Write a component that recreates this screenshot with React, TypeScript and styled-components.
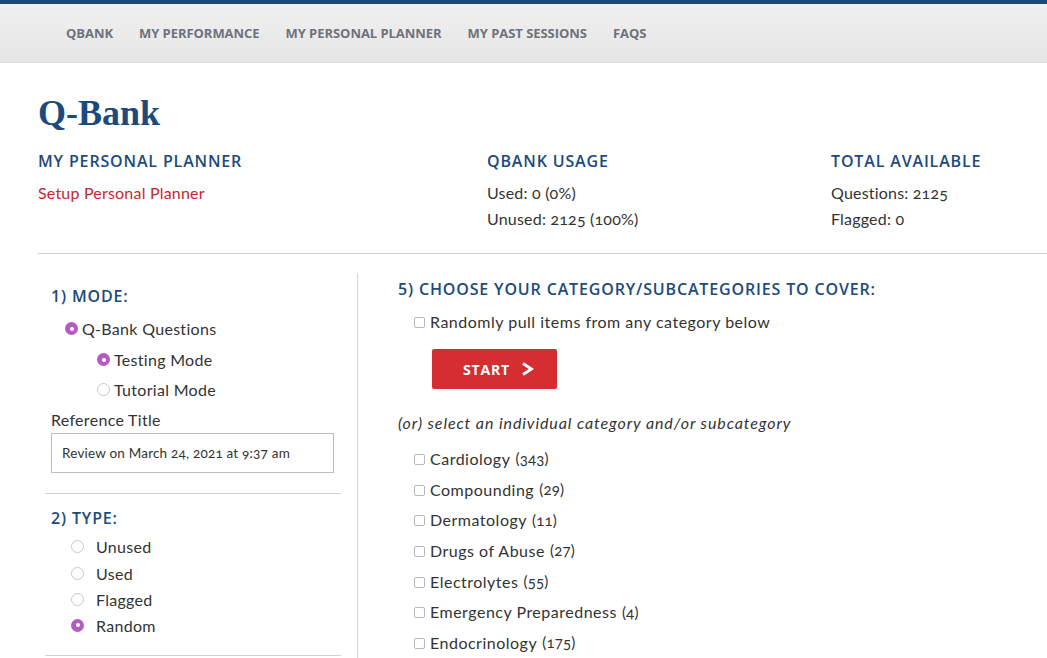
import React from "react";
import styled, { createGlobalStyle } from "styled-components";

const Global = createGlobalStyle`
  html, body { margin: 0; padding: 0; background: #fff; }
  body {
    font-family: "Lato", "Open Sans", sans-serif;
    color: #333;
    font-variant-numeric: oldstyle-nums;
  }
  * { box-sizing: border-box; }
`;

const blue = "#1c4a7c";

const Page = styled.div`
  width: 1047px;
  height: 658px;
  overflow: hidden;
`;

const NavBar = styled.nav`
  border-top: 4px solid ${blue};
  height: 63px;
  background: linear-gradient(#f0f0f0, #e6e6e6);
  border-bottom: 1px solid #ddd;
  display: flex;
  align-items: center;
  gap: 26px;
  padding: 0 0 0 66px;
`;

const NavItem = styled.a`
  font-family: "Open Sans", sans-serif;
  font-weight: 700;
  font-size: 13px;
  color: #6f727c;
  letter-spacing: -0.05px;
  text-decoration: none;
  font-variant-numeric: normal;
`;

const Main = styled.main`
  padding: 0 0 0 38px;
`;

const Title = styled.h1`
  margin: 0;
  padding-top: 30px;
  height: 86px;
  font-family: "Liberation Serif", "DejaVu Serif", serif;
  font-weight: 700;
  font-size: 36px;
  line-height: 40px;
  color: ${blue};
`;

const Summary = styled.section`
  display: grid;
  grid-template-columns: 449px 344px 1fr;
  padding-top: 2px;
  padding-bottom: 21px;
  border-bottom: 1px solid #cfcfcf;
`;

const SummaryCol = styled.div`
  display: flex;
  flex-direction: column;
`;

const Heading = styled.h3`
  margin: 0;
  font-family: "Open Sans", sans-serif;
  font-weight: 600;
  font-size: 16px;
  line-height: 20px;
  color: ${blue};
  text-transform: uppercase;
  letter-spacing: 0.85px;
  font-variant-numeric: normal;
`;

const SummaryHeading = styled(Heading)`
  margin-bottom: 9px;
`;

const Stat = styled.div<{ $red?: boolean }>`
  font-size: 16px;
  line-height: 26px;
  letter-spacing: 0.2px;
  color: ${(p) => (p.$red ? "#c4282e" : "#333")};
`;

const Body = styled.div`
  display: grid;
  grid-template-columns: 320px 1fr;
  padding-top: 19px;
`;

const LeftCol = styled.aside`
  border-right: 1px solid #d6d6d6;
  padding: 13px 16px 0 7px;
  height: 400px;
`;

const Block = styled.div`
  padding: 0 0 0 6px;
  border-bottom: 1px solid #d2d2d2;
`;

const ModeHead = styled(Heading)`
  margin-bottom: 7px;
`;

const TypeHead = styled(Heading)`
  margin-bottom: 5px;
`;

const RadioRow = styled.label<{ $indent: number; $gap: number; $h: number }>`
  display: flex;
  align-items: center;
  gap: ${(p) => p.$gap}px;
  padding-left: ${(p) => p.$indent}px;
  height: ${(p) => p.$h}px;
  font-size: 16px;
  letter-spacing: 0.3px;
  color: #333;
`;

const RadioDot = styled.span<{ $on?: boolean }>`
  width: 13px;
  height: 13px;
  border-radius: 50%;
  flex: none;
  background: ${(p) => (p.$on ? "#b45cc2" : "#fff")};
  border: ${(p) => (p.$on ? "none" : "1px solid #c8c8c8")};
  display: flex;
  align-items: center;
  justify-content: center;
  &::after {
    content: "";
    width: 4px;
    height: 4px;
    border-radius: 50%;
    background: #fff;
    display: ${(p) => (p.$on ? "block" : "none")};
  }
`;

const FieldLabel = styled.div`
  font-size: 16px;
  line-height: 20px;
  margin-top: 6px;
  letter-spacing: 0.3px;
  color: #333;
`;

const TextBox = styled.div`
  margin-top: 3px;
  width: 283px;
  height: 40px;
  border: 1px solid #bdbdbd;
  padding: 0 10px;
  display: flex;
  align-items: center;
  font-size: 13.5px;
  letter-spacing: 0.2px;
  color: #333;
  margin-bottom: 20px;
`;

const TypeBlock = styled.div`
  padding: 14px 0 17px 6px;
  border-bottom: 1px solid #d2d2d2;
`;

const RightCol = styled.section`
  padding: 6px 0 0 40px;
`;

const CheckRow = styled.label<{ $h: number }>`
  display: flex;
  align-items: center;
  gap: 5px;
  height: ${(p) => p.$h}px;
  padding-left: 16px;
  font-size: 16px;
  letter-spacing: 0.5px;
  color: #333;
`;

const RandomRow = styled(CheckRow)`
  margin-top: 6px;
`;

const Box = styled.span`
  width: 11px;
  height: 11px;
  border: 1px solid #b8b8b8;
  border-radius: 2px;
  flex: none;
  margin-top: 2px;
`;

const Count = styled.span`
  font-size: 15px;
  letter-spacing: 0.2px;
`;

const StartButton = styled.button`
  margin: 12px 0 0 34px;
  width: 125px;
  height: 40px;
  padding: 0 0 0 31px;
  background: #d62d33;
  border: none;
  border-radius: 2px;
  color: #fff;
  font-family: "Open Sans", sans-serif;
  font-weight: 700;
  font-size: 14px;
  letter-spacing: 0.8px;
  display: flex;
  align-items: center;
  justify-content: flex-start;
  gap: 11px;
`;

const Note = styled.p`
  margin: 24px 0 10px;
  font-size: 16px;
  line-height: 20px;
  font-style: italic;
  letter-spacing: 0.9px;
  color: #333;
`;

const categories: [string, number][] = [
  ["Cardiology", 343],
  ["Compounding", 29],
  ["Dermatology", 11],
  ["Drugs of Abuse", 27],
  ["Electrolytes", 55],
  ["Emergency Preparedness", 4],
  ["Endocrinology", 175],
];

export default function App() {
  return (
    <Page>
      <Global />
      <NavBar>
        <NavItem>QBANK</NavItem>
        <NavItem>MY PERFORMANCE</NavItem>
        <NavItem>MY PERSONAL PLANNER</NavItem>
        <NavItem>MY PAST SESSIONS</NavItem>
        <NavItem>FAQS</NavItem>
      </NavBar>
      <Main>
        <Title>Q-Bank</Title>
        <Summary>
          <SummaryCol>
            <SummaryHeading>My Personal Planner</SummaryHeading>
            <Stat $red>Setup Personal Planner</Stat>
          </SummaryCol>
          <SummaryCol>
            <SummaryHeading>QBank Usage</SummaryHeading>
            <Stat>Used: 0 (0%)</Stat>
            <Stat>Unused: 2125 (100%)</Stat>
          </SummaryCol>
          <SummaryCol>
            <SummaryHeading>Total Available</SummaryHeading>
            <Stat>Questions: 2125</Stat>
            <Stat>Flagged: 0</Stat>
          </SummaryCol>
        </Summary>
        <Body>
          <LeftCol>
            <Block>
              <ModeHead>1) Mode:</ModeHead>
              <RadioRow $indent={14} $gap={4} $h={31}>
                <RadioDot $on />
                Q-Bank Questions
              </RadioRow>
              <RadioRow $indent={46} $gap={4} $h={31}>
                <RadioDot $on />
                Testing Mode
              </RadioRow>
              <RadioRow $indent={46} $gap={4} $h={29}>
                <RadioDot />
                Tutorial Mode
              </RadioRow>
              <FieldLabel>Reference Title</FieldLabel>
              <TextBox>Review on March 24, 2021 at 9:37 am</TextBox>
            </Block>
            <TypeBlock>
              <TypeHead>2) Type:</TypeHead>
              <RadioRow $indent={20} $gap={12} $h={27}>
                <RadioDot />
                Unused
              </RadioRow>
              <RadioRow $indent={20} $gap={12} $h={26}>
                <RadioDot />
                Used
              </RadioRow>
              <RadioRow $indent={20} $gap={12} $h={26}>
                <RadioDot />
                Flagged
              </RadioRow>
              <RadioRow $indent={20} $gap={12} $h={26}>
                <RadioDot $on />
                Random
              </RadioRow>
            </TypeBlock>
          </LeftCol>
          <RightCol>
            <Heading>5) Choose your category/subcategories to cover:</Heading>
            <RandomRow $h={32}>
              <Box />
              Randomly pull items from any category below
            </RandomRow>
            <StartButton>
              START
              <svg width="13" height="14" viewBox="0 0 13 14">
                <path d="M2 1.5 L10.5 7 L2 12.5" fill="none" stroke="#fff" strokeWidth="2.8" strokeLinejoin="miter" />
              </svg>
            </StartButton>
            <Note>(or) select an individual category and/or subcategory</Note>
            {categories.map(([name, n]) => (
              <CheckRow key={name} $h={30.7}>
                <Box />
                {name} <Count>({n})</Count>
              </CheckRow>
            ))}
          </RightCol>
        </Body>
      </Main>
    </Page>
  );
}
